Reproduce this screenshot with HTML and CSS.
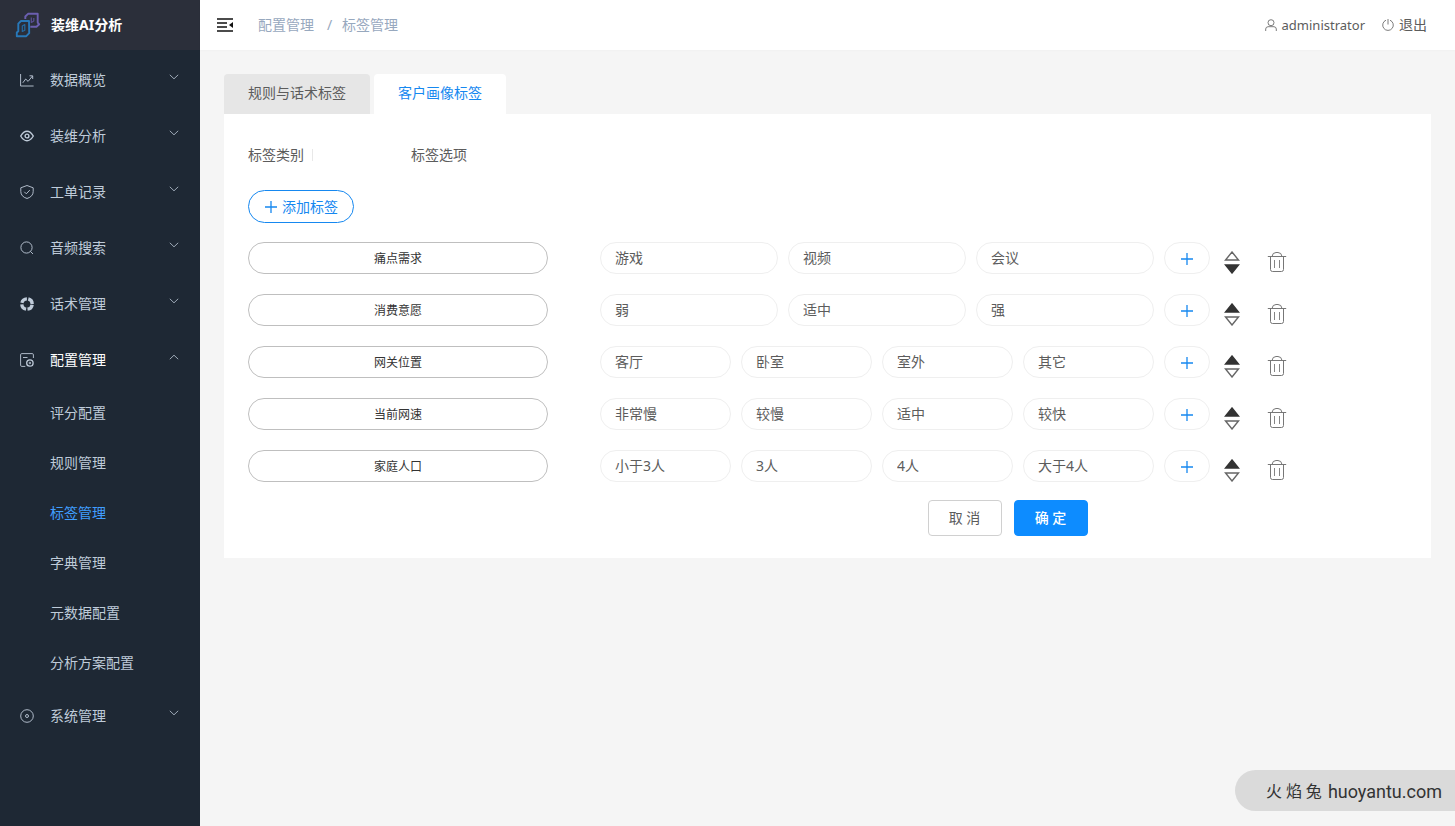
FILE: index.html
```html
<!DOCTYPE html>
<html lang="zh-CN">
<head>
<meta charset="utf-8">
<meta name="viewport" content="width=device-width, initial-scale=1">
<title>标签管理</title>
<link rel="stylesheet" href="styles.css">
</head>
<body>
<svg class="defs" aria-hidden="true">
  <symbol id="down" viewBox="0 0 10 6"><path d="M.8.8 5 4.8 9.200.8" fill="none" stroke="currentColor"/></symbol>
  <symbol id="plus" viewBox="0 0 12 12"><path d="M6 0v12M0 6h12" fill="none" stroke="currentColor" stroke-width="1.300"/></symbol>
  <symbol id="up-tri" viewBox="0 0 16 10"><path d="M8 1 14.500 9h-13z" stroke="currentColor" stroke-width="1.400"/></symbol>
  <symbol id="down-tri" viewBox="0 0 16 10"><path d="M8 9 14.500 1h-13z" stroke="currentColor" stroke-width="1.400"/></symbol>
  <symbol id="trash" viewBox="0 0 20 22"><g fill="none" stroke="currentColor"><path d="M.8 5.500h18.400M3.500 5.500v13q0 2 2 2h9q2 0 2-2v-13M5 5.500q.5-4 4-4h2q3.500 0 4 4"/><path d="M7.500 9v8M12.500 9v8" stroke-width=".9"/></g></symbol>
</svg>
<div class="app">
  <aside class="sidebar">
    <div class="brand">
      <svg class="logo" viewBox="0 0 26 26" fill="none" stroke-width="1.900" stroke-linejoin="round">
        <path d="M10.300 7V4.500L13 1.800h9.700v8.800l1.500 1.700-2.700 2.500h-6.200" stroke="#6b5fb0"/>
        <path d="M16.300 5.500v5l2.500-1.500V6" stroke="#594f94" stroke-width="1.200"/>
        <path d="M14 9H6L3.300 11.700v7.500L1.800 20.500v3.700h9.500l2.900-3z" stroke="#2878b8"/>
        <path d="M9.800 12.500 7.300 14v5.500l2.500-1.300z" stroke="#246aa2" stroke-width="1.200"/>
      </svg>
      <h1 class="brand-name">装维AI分析</h1>
    </div>
    <nav class="menu">
      <button class="menu-item" type="button">
        <svg class="menu-icon" viewBox="0 0 14 14"><path d="M.6 1v12h13M2.800 9.800 5.700 6l2.400 2.400L12.500 3M9.500 2.800h3.200V6"/></svg>
        <span>数据概览</span><svg class="arrow"><use href="#down"/></svg>
      </button>
      <button class="menu-item" type="button">
        <svg class="menu-icon bold" viewBox="0 0 14 14"><path d="M.7 7Q3.500 2.200 7 2.200T13.300 7Q10.500 11.800 7 11.800T.7 7z"/><circle cx="7" cy="7" r="1.900"/></svg>
        <span>装维分析</span><svg class="arrow"><use href="#down"/></svg>
      </button>
      <button class="menu-item" type="button">
        <svg class="menu-icon" viewBox="0 0 14 14"><path d="M7 .5 13.200 2.800v3.700Q13.200 11.500 7 13.500.8 11.500.8 6.500V2.800zM4.300 6.800l2 2 3.500-3.700"/></svg>
        <span>工单记录</span><svg class="arrow"><use href="#down"/></svg>
      </button>
      <button class="menu-item" type="button">
        <svg class="menu-icon" viewBox="0 0 14 14"><circle cx="6.500" cy="6.500" r="5.600"/><path d="m10.500 10.500 2.500 2.500"/></svg>
        <span>音频搜索</span><svg class="arrow"><use href="#down"/></svg>
      </button>
      <button class="menu-item" type="button">
        <svg class="menu-icon" viewBox="0 0 14 14"><circle cx="7" cy="7" r="5.200" stroke-width="3.300" stroke-dasharray="6.700 1.468" stroke-dashoffset="-.734"/></svg>
        <span>话术管理</span><svg class="arrow"><use href="#down"/></svg>
      </button>
      <button class="menu-item open" type="button" aria-expanded="true">
        <svg class="menu-icon" viewBox="0 0 14 14"><path d="M13.400 5V1.800q0-1.200-1.200-1.200H1.800Q.6.600.6 1.800v10.400q0 1.200 1.200 1.200h3.500M3 4.500h4.500"/><circle cx="9.900" cy="10" r="3.200" stroke-width="1.300"/><circle cx="9.900" cy="10" r=".8"/></svg>
        <span>配置管理</span><svg class="arrow"><use href="#down"/></svg>
      </button>
      <div class="submenu">
        <a href="#">评分配置</a>
        <a href="#">规则管理</a>
        <a href="#" class="current" aria-current="page">标签管理</a>
        <a href="#">字典管理</a>
        <a href="#">元数据配置</a>
        <a href="#">分析方案配置</a>
      </div>
      <button class="menu-item" type="button">
        <svg class="menu-icon" viewBox="0 0 14 14"><circle cx="7" cy="7" r="6.300"/><circle cx="7" cy="7" r="1.500"/></svg>
        <span>系统管理</span><svg class="arrow"><use href="#down"/></svg>
      </button>
    </nav>
  </aside>
  <div class="page">
    <header class="topbar">
      <button class="fold" type="button" aria-label="收起菜单"><svg viewBox="0 0 16 14"><path d="M0 1h16M0 5h10M0 9h10M0 13h16" stroke="currentColor" stroke-width="1.600"/><path d="M16 4v6l-4-3z" fill="currentColor"/></svg></button>
      <nav class="crumbs" aria-label="面包屑"><a href="#">配置管理</a><span class="slash">/</span><span>标签管理</span></nav>
      <div class="account">
        <a href="#" class="user"><svg viewBox="0 0 12 12"><circle cx="6" cy="3.700" r="3"/><path d="M.7 12V10q0-2 2.300-2.300h6q2.300.3 2.300 2.300v2"/></svg>administrator</a>
        <a href="#"><svg viewBox="0 0 12 12"><path d="M4 1.200a5.300 5.300 0 1 0 4 0M6 0v5.500"/></svg>退出</a>
      </div>
    </header>
    <main class="main">
      <div class="tabs" role="tablist">
        <button class="tab" type="button" role="tab" aria-selected="false">规则与话术标签</button>
        <button class="tab active" type="button" role="tab" aria-selected="true">客户画像标签</button>
      </div>
      <form class="panel">
        <div class="heads"><span class="head">标签类别</span><span>标签选项</span></div>
        <button class="add-tag" type="button"><svg><use href="#plus"/></svg>添加标签</button>
        <div class="rows">
          <div class="row">
            <input class="name" aria-label="标签类别" value="痛点需求">
            <div class="options"><input aria-label="选项" value="游戏"><input aria-label="选项" value="视频"><input aria-label="选项" value="会议"></div>
            <button class="add-option" type="button" aria-label="添加选项"><svg><use href="#plus"/></svg></button>
            <div class="sort"><button type="button" aria-label="上移" disabled><svg><use href="#up-tri"/></svg></button><button type="button" aria-label="下移" class="solid"><svg><use href="#down-tri"/></svg></button></div>
            <button class="remove" type="button" aria-label="删除"><svg><use href="#trash"/></svg></button>
          </div>
          <div class="row">
            <input class="name" aria-label="标签类别" value="消费意愿">
            <div class="options"><input aria-label="选项" value="弱"><input aria-label="选项" value="适中"><input aria-label="选项" value="强"></div>
            <button class="add-option" type="button" aria-label="添加选项"><svg><use href="#plus"/></svg></button>
            <div class="sort"><button type="button" aria-label="上移" class="solid"><svg><use href="#up-tri"/></svg></button><button type="button" aria-label="下移"><svg><use href="#down-tri"/></svg></button></div>
            <button class="remove" type="button" aria-label="删除"><svg><use href="#trash"/></svg></button>
          </div>
          <div class="row">
            <input class="name" aria-label="标签类别" value="网关位置">
            <div class="options"><input aria-label="选项" value="客厅"><input aria-label="选项" value="卧室"><input aria-label="选项" value="室外"><input aria-label="选项" value="其它"></div>
            <button class="add-option" type="button" aria-label="添加选项"><svg><use href="#plus"/></svg></button>
            <div class="sort"><button type="button" aria-label="上移" class="solid"><svg><use href="#up-tri"/></svg></button><button type="button" aria-label="下移"><svg><use href="#down-tri"/></svg></button></div>
            <button class="remove" type="button" aria-label="删除"><svg><use href="#trash"/></svg></button>
          </div>
          <div class="row">
            <input class="name" aria-label="标签类别" value="当前网速">
            <div class="options"><input aria-label="选项" value="非常慢"><input aria-label="选项" value="较慢"><input aria-label="选项" value="适中"><input aria-label="选项" value="较快"></div>
            <button class="add-option" type="button" aria-label="添加选项"><svg><use href="#plus"/></svg></button>
            <div class="sort"><button type="button" aria-label="上移" class="solid"><svg><use href="#up-tri"/></svg></button><button type="button" aria-label="下移"><svg><use href="#down-tri"/></svg></button></div>
            <button class="remove" type="button" aria-label="删除"><svg><use href="#trash"/></svg></button>
          </div>
          <div class="row">
            <input class="name" aria-label="标签类别" value="家庭人口">
            <div class="options"><input aria-label="选项" value="小于3人"><input aria-label="选项" value="3人"><input aria-label="选项" value="4人"><input aria-label="选项" value="大于4人"></div>
            <button class="add-option" type="button" aria-label="添加选项"><svg><use href="#plus"/></svg></button>
            <div class="sort"><button type="button" aria-label="上移" class="solid"><svg><use href="#up-tri"/></svg></button><button type="button" aria-label="下移"><svg><use href="#down-tri"/></svg></button></div>
            <button class="remove" type="button" aria-label="删除"><svg><use href="#trash"/></svg></button>
          </div>
        </div>
        <div class="actions"><button class="cancel" type="button">取 消</button><button class="confirm" type="button">确 定</button></div>
      </form>
    </main>
  </div>
</div>
<div class="watermark"><span class="watermark-cn">火 焰 兔</span><span>huoyantu.com</span></div>
</body>
</html>
```
FILE: styles.css
```css
* { box-sizing: border-box; }
body {
  margin: 0;
  background: #f5f5f5;
  color: #5c5c5c;
  font: 14px/22px "Noto Sans", "Noto Sans CJK SC", sans-serif;
}
button, input { font: inherit; color: inherit; margin: 0; }
button { padding: 0; border: 0; background: none; cursor: pointer; }
button:disabled { color: inherit; }
a { color: inherit; text-decoration: none; }
svg { display: block; flex: none; }
.defs { position: absolute; width: 0; height: 0; }

.app { display: flex; min-height: 100vh; }
.sidebar { flex: none; width: 200px; background: #1e2834; color: #bfcbd9; }
.brand {
  display: flex;
  align-items: center;
  gap: 10px;
  height: 50px;
  padding-left: 15px;
  background: #2b2f3a;
}
.logo { width: 26px; height: 26px; }
.brand-name { margin: 0; color: #fff; font-size: 14px; font-weight: 700; }
.menu { padding-top: 2px; }
.menu-item {
  display: flex;
  align-items: center;
  width: 100%;
  height: 56px;
  padding: 0 21px 0 20px;
}
.menu-icon {
  width: 14px;
  height: 14px;
  margin-right: 16px;
  fill: none;
  stroke: currentColor;
  stroke-width: 0.900;
}
.menu-icon.bold { stroke-width: 1.400; }
.arrow { width: 10px; height: 6px; margin: 0 0 6px auto; opacity: 0.8; }
.open span { color: #fff; }
.open .arrow { transform: rotate(180deg); }
.submenu a { display: block; padding: 14px 0 14px 50px; }
.submenu .current { color: #409eff; }

.page { flex: 1; min-width: 0; }
.topbar {
  display: flex;
  align-items: center;
  height: 50px;
  padding: 0 28px 0 17px;
  background: #fff;
  box-shadow: 0 1px 2px rgba(0, 0, 0, 0.02);
}
.fold { color: #111; }
.fold svg { width: 16px; height: 14px; }
.crumbs { display: flex; margin-left: 25px; color: #97a8be; }
.slash { width: 28px; padding-left: 3px; text-align: center; }
.account { display: flex; gap: 17px; margin-left: auto; }
.account a { display: flex; align-items: center; gap: 5px; }
.account .user { font-size: 13px; }
.account svg { width: 12px; height: 12px; fill: none; stroke: currentColor; stroke-width: 0.800; }

.main { padding: 24px; }
.tabs { display: flex; gap: 4px; }
.tab {
  height: 40px;
  padding: 0 24px 2px;
  border-radius: 4px 4px 0 0;
  background: #e6e6e6;
}
.tab.active { background: #fff; color: #1688f0; }
.panel { padding: 30px 24px 22px; background: #fff; }
.heads { display: flex; gap: 98px; }
.head { position: relative; padding-right: 9px; }
.head::after {
  content: "";
  position: absolute;
  right: 0;
  top: 5px;
  height: 12px;
  border-right: 1px solid #e8e8e8;
}
.add-tag {
  display: flex;
  align-items: center;
  gap: 5px;
  height: 33px;
  margin-top: 24px;
  padding: 0 15px 0 16px;
  border: 1px solid #1688f0;
  border-radius: 17px;
  color: #1688f0;
}
.add-tag svg, .add-option svg { width: 12px; height: 12px; }
.rows { display: grid; gap: 20px; margin-top: 19px; }
.row {
  display: grid;
  grid-template-columns: 300px minmax(0, 606px) 56px 30px 47px;
  align-items: center;
}
.options { display: flex; gap: 10px; padding-left: 52px; }
.row input {
  min-width: 0;
  height: 32px;
  padding: 0 14px 2px;
  border: 1px solid #efefef;
  border-radius: 16px;
  background: #fff;
}
.options input { flex: 1; width: 0; }
.row .name {
  width: 100%;
  padding-bottom: 1px;
  border-color: #bfbfbf;
  color: #333;
  font-size: 12px;
  text-align: center;
}
.add-option {
  display: grid;
  place-items: center;
  height: 32px;
  margin-left: 10px;
  padding-top: 2px;
  border: 1px solid #efefef;
  border-radius: 16px;
  color: #1688f0;
}
.sort {
  display: grid;
  gap: 3px;
  margin-left: 14px;
  padding-top: 8px;
  color: #666;
}
.sort svg { width: 16px; height: 10px; fill: none; }
.sort .solid { color: #333; }
.sort .solid svg { fill: currentColor; }
.remove { height: 32px; padding: 8px 0 0 27px; color: #777; }
.remove svg { width: 20px; height: 22px; }
.actions {
  display: flex;
  justify-content: center;
  gap: 12px;
  margin-top: 18px;
  padding-left: 360px;
}
.actions button { width: 74px; height: 36px; border: 1px solid #d0d0d0; border-radius: 4px; }
.actions .confirm { border-color: #0d8cff; background: #0d8cff; color: #fff; font-weight: 500; }

.watermark {
  display: flex;
  gap: 6px;
  position: fixed;
  right: 0;
  bottom: 15px;
  height: 41px;
  padding: 0 13px 0 31px;
  border-radius: 21px 0 0 21px;
  background: #dadada;
  color: #333;
  font: 18px/43px Roboto, "Noto Sans CJK SC", sans-serif;
  white-space: nowrap;
}
.watermark-cn { font-size: 16px; }
```
